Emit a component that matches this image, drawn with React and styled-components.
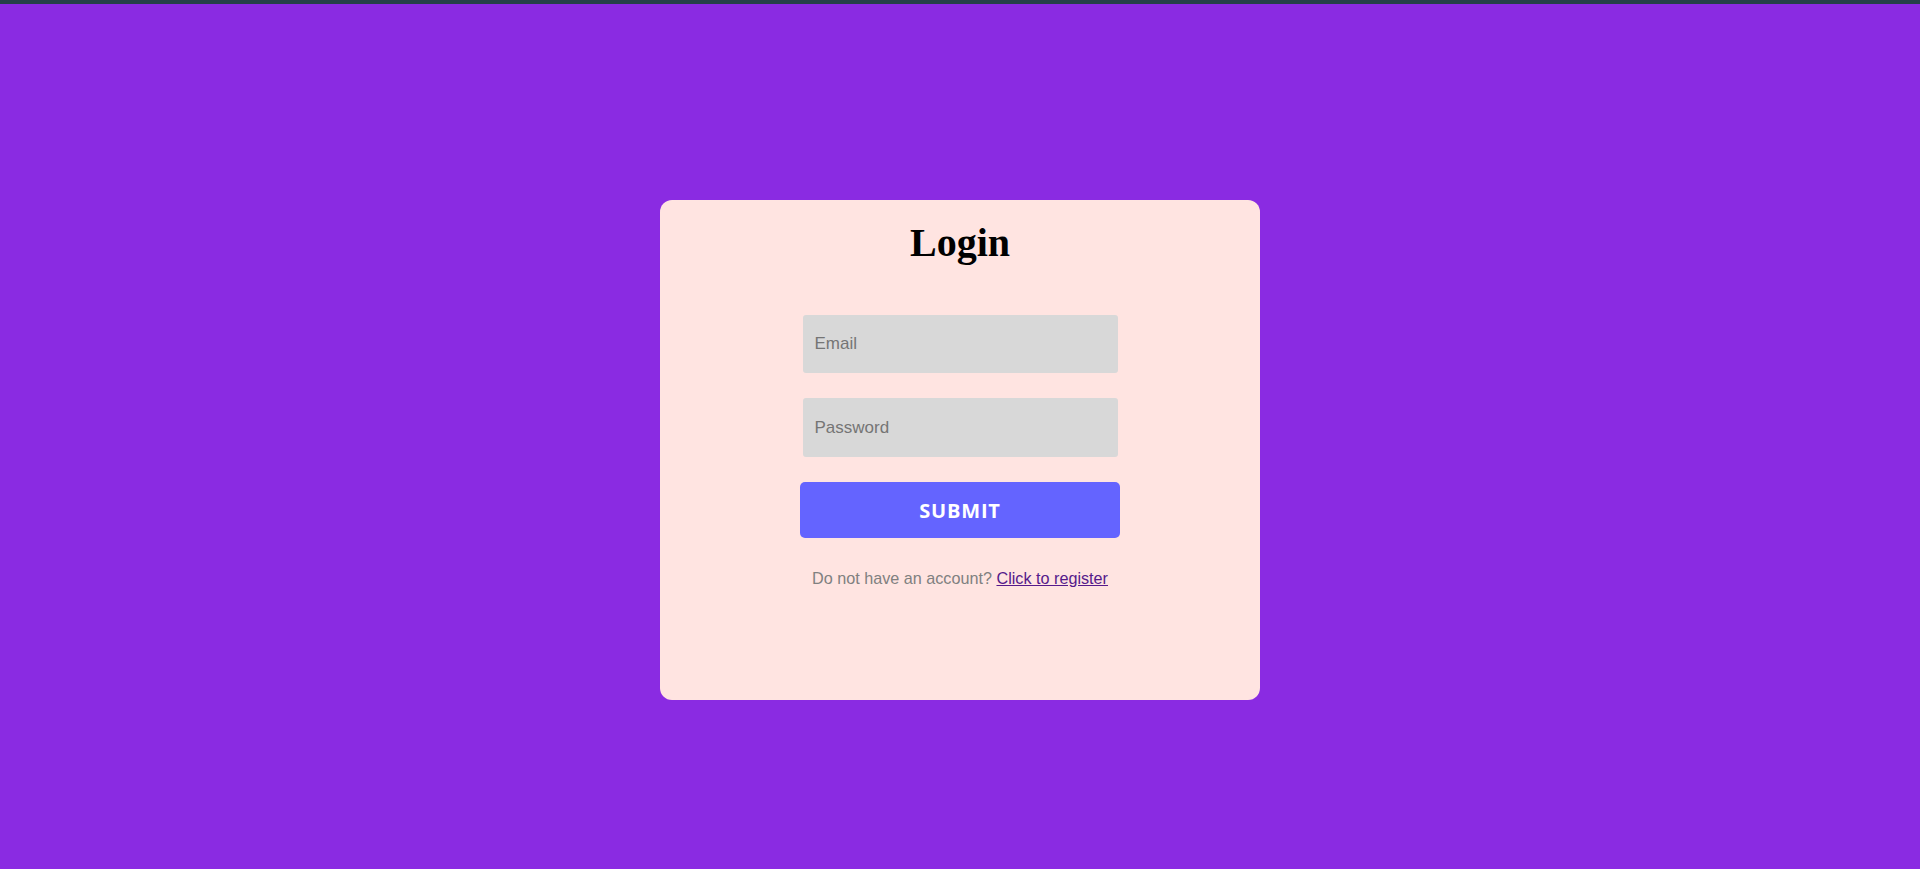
import React, { useState } from 'react';
import styled, { createGlobalStyle } from 'styled-components';

const GlobalStyle = createGlobalStyle`
  html, body {
    margin: 0;
    padding: 0;
  }
  body {
    background: #8a2be2;
    font-family: "Liberation Sans", Arial, sans-serif;
  }
`;

const Page = styled.div`
  min-height: 100vh;
  box-sizing: border-box;
  border-top: 4px solid #25404a;
  display: flex;
  justify-content: center;
  align-items: flex-start;
  padding-top: 196px;
`;

const Card = styled.form`
  width: 600px;
  height: 500px;
  box-sizing: border-box;
  background: #ffe4e1;
  border-radius: 12px;
  display: flex;
  flex-direction: column;
  align-items: center;
  padding-top: 20px;
`;

const Title = styled.h1`
  margin: 0 0 49px;
  font-family: "Liberation Serif", "Times New Roman", serif;
  font-size: 40px;
  line-height: 46px;
  font-weight: bold;
  color: #000;
`;

const Field = styled.input`
  width: 315px;
  height: ${(p) => p.$h}px;
  box-sizing: border-box;
  margin: 0 0 25px;
  padding: 0 12px;
  border: none;
  border-radius: 3px;
  background: #d8d8d8;
  font-family: "Liberation Sans", Arial, sans-serif;
  font-size: 17px;
  color: #333;
  outline: none;
  &::placeholder {
    color: #757575;
  }
`;

const Submit = styled.button`
  width: 320px;
  height: 56px;
  margin: 0 0 31px;
  border: none;
  border-radius: 5px;
  background: #6464ff;
  color: #fff;
  font-family: "Open Sans", "Noto Sans", sans-serif;
  font-weight: 700;
  font-size: 20px;
  letter-spacing: 0.8px;
  cursor: pointer;
`;

const Footer = styled.p`
  margin: 0;
  font-size: 16.2px;
  line-height: 18px;
  color: #808080;
`;

const RegisterLink = styled.a`
  color: #551a8b;
  text-decoration: underline;
  cursor: pointer;
`;

export default function App() {
  const [form, setForm] = useState({ email: '', password: '' });

  const handleSubmit = (e) => {
    e.preventDefault();
  };

  return (
    <>
      <GlobalStyle />
      <Page>
        <Card onSubmit={handleSubmit}>
          <Title>Login</Title>
          <Field
            $h={58}
            type="email"
            placeholder="Email"
            value={form.email}
            onChange={(e) => setForm({ ...form, email: e.target.value })}
          />
          <Field
            $h={59}
            type="password"
            placeholder="Password"
            value={form.password}
            onChange={(e) => setForm({ ...form, password: e.target.value })}
          />
          <Submit type="submit">SUBMIT</Submit>
          <Footer>
            Do not have an account? <RegisterLink href="#">Click to register</RegisterLink>
          </Footer>
        </Card>
      </Page>
    </>
  );
}
